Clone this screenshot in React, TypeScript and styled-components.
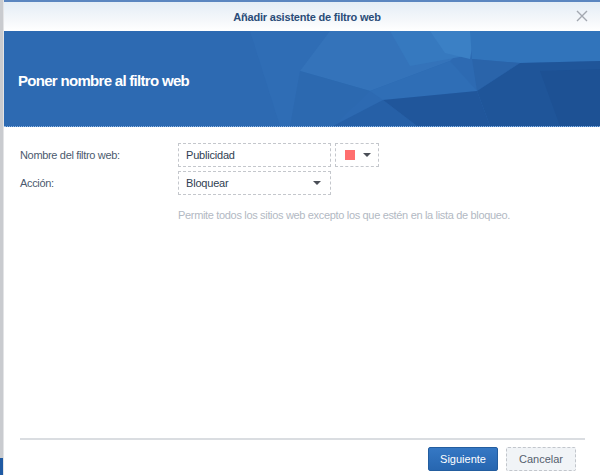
import React from 'react';
import styled, { createGlobalStyle } from 'styled-components';

const GlobalStyle = createGlobalStyle`
    html, body {
        margin: 0;
        padding: 0;
        background: #ffffff;
    }
    body {
        font-family: "Liberation Sans", Arial, sans-serif;
    }
`;

const Screen = styled.div`
    width: 600px;
    height: 475px;
    display: flex;
    overflow: hidden;
`;

const EdgeStrip = styled.div`
    width: 3px;
    flex-shrink: 0;
    display: flex;
    flex-direction: column;
    background: #c9cbcf;
    border-right: 1px solid #e3e4e6;

    &::after {
        content: '';
        margin-top: auto;
        height: 17px;
        background: #1f5aa3;
    }
`;

const Dialog = styled.div`
    flex: 1;
    display: flex;
    flex-direction: column;
    background: #ffffff;
    border-top: 2px solid #5b86c0;
`;

const TitleBar = styled.div`
    height: 29px;
    position: relative;
    display: flex;
    align-items: center;
    justify-content: center;
    background: linear-gradient(#e4edf6, #f4f7fa 60%, #ffffff);
`;

const TitleText = styled.span`
    font-size: 11px;
    font-weight: bold;
    letter-spacing: -0.2px;
    color: #2a4c78;
    margin-left: 10px;
`;

const CloseButton = styled.span`
    position: absolute;
    right: 12px;
    top: 8px;
    width: 12px;
    height: 12px;
    display: flex;
`;

const Banner = styled.div`
    height: 96px;
    box-sizing: border-box;
    position: relative;
    display: flex;
    align-items: center;
    padding: 4px 0 0 14px;
    background: #2d6ab2;
    border-bottom: 1px dotted #8fb6e3;
    overflow: hidden;
`;

const BannerArt = styled.svg`
    position: absolute;
    right: 0;
    top: 0;
`;

const BannerTitle = styled.h1`
    position: relative;
    margin: 0;
    font-size: 15px;
    font-weight: bold;
    letter-spacing: -0.7px;
    color: #ffffff;
`;

const Body = styled.div`
    flex: 1;
    display: flex;
    flex-direction: column;
    padding: 16px 0 0 16px;
`;

const FormGrid = styled.div`
    display: grid;
    grid-template-columns: 158px auto;
    row-gap: 4px;
    align-items: center;
`;

const Label = styled.label`
    font-size: 11px;
    letter-spacing: -0.33px;
    color: #4b5a6e;
`;

const FieldRow = styled.div`
    display: flex;
    gap: 4px;
`;

const Field = styled.div`
    width: 153px;
    height: 24px;
    box-sizing: border-box;
    border: 1px dashed #c4c7cc;
    display: flex;
    align-items: center;
    justify-content: space-between;
    padding: 0 9px 0 7px;
    font-size: 11px;
    letter-spacing: -0.2px;
    color: #2f3e52;
`;

const ColorPicker = styled.div`
    width: 44px;
    height: 24px;
    box-sizing: border-box;
    border: 1px dashed #c4c7cc;
    display: flex;
    align-items: center;
    gap: 8px;
    padding-left: 9px;
`;

const Swatch = styled.span<{ $color: string }>`
    width: 10px;
    height: 10px;
    background: ${p => p.$color};
`;

const Caret = styled.span`
    width: 0;
    height: 0;
    border-left: 4px solid transparent;
    border-right: 4px solid transparent;
    border-top: 4px solid #4a4f57;
`;

const Hint = styled.div`
    grid-column: 2;
    margin-top: 10px;
    font-size: 11px;
    letter-spacing: -0.33px;
    color: #b2b9c3;
`;

const Footer = styled.div`
    margin: auto 15px 0 0;
    padding: 7px 9px 4px 0;
    border-top: 2px solid #dadde1;
    display: flex;
    justify-content: flex-end;
    gap: 8px;
`;

const Button = styled.button<{ $variant?: 'primary' | 'secondary' }>`
    width: 70px;
    height: 24px;
    border-radius: 2px;
    font-family: inherit;
    font-size: 11px;
    cursor: pointer;

    ${p => p.$variant === 'primary' ? `
        background: linear-gradient(#3578c4, #2766b0);
        border: 1px solid #235d9f;
        color: #ffffff;
    ` : `
        background: #f1f4f7;
        border: 1px dashed #c2c6cc;
        color: #55606e;
    `}
`;

const BannerPolygons: React.FC = () => (
    <BannerArt width="360" height="95" viewBox="0 0 360 95">
        <polygon points="10,0 110,0 50,95 40,95" fill="#2f6db5" />
        <polygon points="90,0 240,0 210,30 130,60 60,40" fill="#3473ba" />
        <polygon points="150,0 240,0 225,25 170,35" fill="#3679bf" />
        <polygon points="190,0 235,0 230,28 205,22" fill="#3b80c5" />
        <polygon points="60,40 130,60 93,95 50,95" fill="#2c69b0" />
        <polygon points="93,95 143,69 177,95" fill="#2660a7" />
        <polygon points="130,60 210,30 237,60 143,69" fill="#2f6eb6" />
        <polygon points="143,69 237,60 250,95 177,95" fill="#20569b" />
        <polygon points="230,0 360,0 360,30 280,32 232,28" fill="#3174bb" />
        <polygon points="232,28 280,32 237,60" fill="#2a64aa" />
        <polygon points="280,32 360,30 360,95 250,95 237,60" fill="#1f5599" />
        <polygon points="300,40 360,38 360,95 320,95" fill="#1d5194" />
    </BannerArt>
);

const CloseIcon: React.FC = () => (
    <svg width="12" height="12" viewBox="0 0 12 12">
        <path d="M1 1 L11 11 M11 1 L1 11" stroke="#a3a8b0" strokeWidth="1.4" />
    </svg>
);

const App: React.FC = () => {
    return (
        <>
            <GlobalStyle />
            <Screen>
                <EdgeStrip />
                <Dialog>
                    <TitleBar>
                        <TitleText>Añadir asistente de filtro web</TitleText>
                        <CloseButton><CloseIcon /></CloseButton>
                    </TitleBar>
                    <Banner>
                        <BannerPolygons />
                        <BannerTitle>Poner nombre al filtro web</BannerTitle>
                    </Banner>
                    <Body>
                        <FormGrid>
                            <Label>Nombre del filtro web:</Label>
                            <FieldRow>
                                <Field>Publicidad</Field>
                                <ColorPicker>
                                    <Swatch $color="#ff6f6f" />
                                    <Caret />
                                </ColorPicker>
                            </FieldRow>
                            <Label>Acción:</Label>
                            <FieldRow>
                                <Field>
                                    Bloquear
                                    <Caret />
                                </Field>
                            </FieldRow>
                            <Hint>Permite todos los sitios web excepto los que estén en la lista de bloqueo.</Hint>
                        </FormGrid>
                        <Footer>
                            <Button $variant="primary">Siguiente</Button>
                            <Button $variant="secondary">Cancelar</Button>
                        </Footer>
                    </Body>
                </Dialog>
            </Screen>
        </>
    );
};

export default App;
